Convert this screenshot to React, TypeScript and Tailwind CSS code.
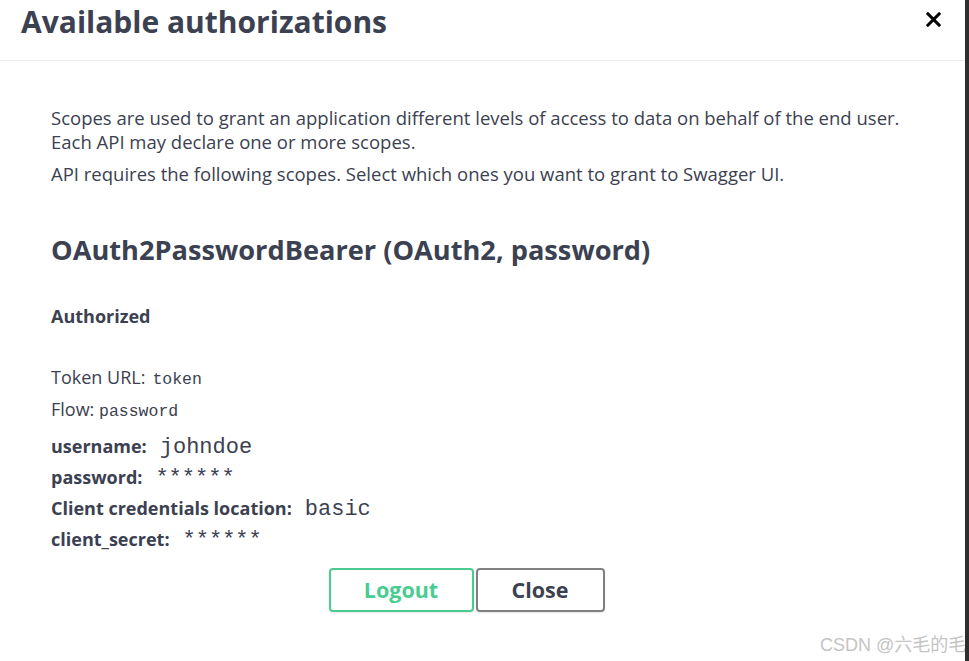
import React from 'react';

const sans = "font-['Open_Sans','Noto_Sans',sans-serif]";
const mono = "font-['Liberation_Mono','DejaVu_Sans_Mono',monospace]";

function CloseIcon() {
  return (
    <svg width="15" height="15" viewBox="0 0 16 16" className="block mt-[8px]">
      <path d="M2 2 L14 14 M14 2 L2 14" stroke="#000" strokeWidth="3.2" strokeLinecap="square" />
    </svg>
  );
}

function Row({ label, value }: { label: string; value: string }) {
  return (
    <div className="flex items-baseline h-[31px]">
      <span className="text-[18px] font-bold">{label}:</span>
      <span className={`${mono} text-[22px] ml-[13px]`}>{value}</span>
    </div>
  );
}

export default function App() {
  return (
    <div className={`${sans} flex w-[969px] h-[661px] bg-white text-[#3b4151]`}>
      <div className="relative flex-1 overflow-hidden">
        <div className="flex items-start justify-between h-[61px] border-b border-[#ebebeb] pl-[21px] pr-[24px] pt-[4px]">
          <h3 className="text-[30px] font-bold leading-[36px]">Available authorizations</h3>
          <CloseIcon />
        </div>

        <div className="px-[51px] pt-[45px]">
          <p className="text-[18.5px] leading-[24px] whitespace-nowrap">
            Scopes are used to grant an application different levels of access to data on behalf of the end user.
            <br />
            Each API may declare one or more scopes.
          </p>
          <p className="text-[18.5px] leading-[24px] mt-[8px]">
            API requires the following scopes. Select which ones you want to grant to Swagger UI.
          </p>

          <h4 className="text-[27.2px] font-bold leading-[32px] mt-[48px]">
            OAuth2PasswordBearer (OAuth2, password)
          </h4>

          <h6 className="text-[18px] font-bold leading-[24px] mt-[38px]">Authorized</h6>

          <div className="mt-[37px] text-[18px]">
            <p className="leading-[24px]">
              Token URL:<span className={`${mono} text-[16.5px] ml-[7px]`}>token</span>
            </p>
            <p className="leading-[24px] mt-[5px]">
              Flow: <span className={`${mono} text-[16.5px]`}>password</span>
            </p>
          </div>

          <div className="mt-[7px]">
            <Row label="username" value="johndoe" />
            <Row label="password" value="******" />
            <Row label="Client credentials location" value="basic" />
            <Row label="client_secret" value="******" />
          </div>

          <div className="flex justify-center w-[831px] mt-[13px]">
            <button className="w-[145px] h-[44px] rounded-[4px] border-2 border-[#49cc90] text-[#49cc90] text-[21.5px] font-bold shadow-[0_1px_2px_rgba(0,0,0,0.1)]">
              Logout
            </button>
            <button className="w-[129px] h-[44px] ml-[2px] rounded-[4px] border-2 border-[#808080] text-[#3b4151] text-[21.5px] font-bold shadow-[0_1px_2px_rgba(0,0,0,0.1)]">
              Close
            </button>
          </div>
        </div>

        <span className="absolute left-[820px] top-[632px] whitespace-nowrap text-[18px] text-[#c4c4c4] font-['Liberation_Sans','Noto_Sans_CJK_SC',sans-serif]">
          CSDN @六毛的毛
        </span>
      </div>
      <div className="w-[4px] bg-[#2e2e2e]" />
    </div>
  );
}
